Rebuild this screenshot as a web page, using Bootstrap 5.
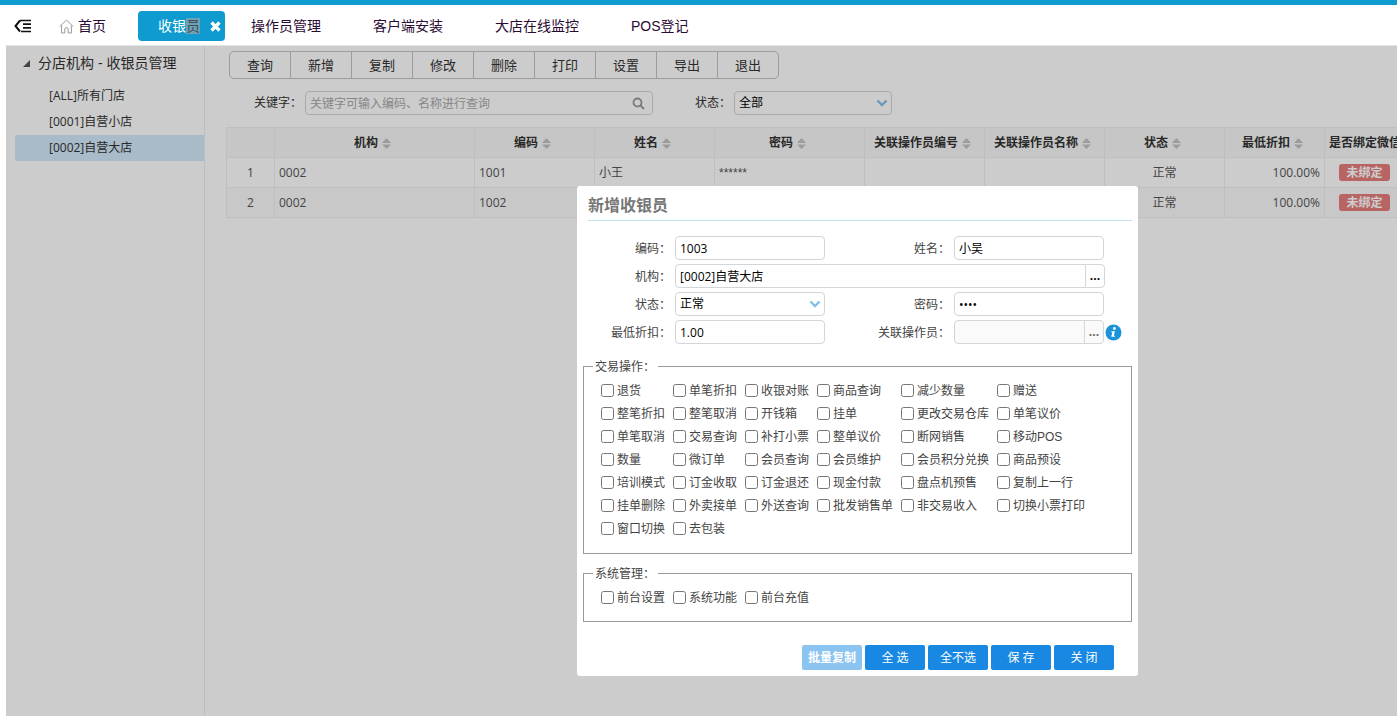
<!DOCTYPE html>
<html lang="zh-CN">
<head>
<meta charset="utf-8">
<meta name="viewport" content="width=device-width, initial-scale=1">
<title>收银员管理</title>
<link href="https://cdn.jsdelivr.net/npm/bootstrap@5.3.0/dist/css/bootstrap.min.css" rel="stylesheet">
<style>
body{font-family:"Open Sans","Noto Sans CJK SC",sans-serif;font-size:12px;line-height:18px;color:#333;background:#fff;overflow:hidden}
.tab-strip,.tree-title,.rights,.masked{font-family:"Liberation Sans","Noto Sans CJK SC",sans-serif}
.app-shell{min-height:100vh;border-top:5px solid #0f9bd0;padding-left:6px}
.tab-strip{height:40px;padding:2px 8px 0;color:#2b0a33}
.tab-strip a,.tree-title{font-size:14px;line-height:20px;color:inherit;text-decoration:none;white-space:nowrap}
.tab-strip .nav-item{margin-right:52px}
.tab-strip .tab-home{margin:0 32px 0 28px}
.tab-strip .tab-active{height:30px;margin-right:26px;padding:0 4px 0 20px;background:#0f9bd0;border-radius:4px;color:#fff}
.picked{background:#6fa2b8;color:#3b4d55}
.plain-btn{border:0;background:none;padding:0;color:inherit;display:flex}
.tab-close{margin-left:10px}
.work-area{border-top:1px solid #e4e4e4}
.side-tree{width:199px;border-right:1px solid #ebeef0;padding:7px 0 0 9px}
.tree-title{padding:0 0 10px 8px}
.tree-node{display:block;height:26px;padding:4px 0 4px 34px;color:#333;text-decoration:none;border-radius:2px 0 0 2px}
.tree-node.current{background:#d4e9fb}
.main-pane{min-width:0;padding:5px 0 0 21px}
.tool-row{margin-left:3px}
.tool-row .btn{width:62px;height:28px;padding:0;font-size:13px;line-height:18px;color:#333;border-color:#c4c4c4;border-radius:5px;flex:none}
.filter-row{margin:12px 0 12px 28px}
.field{height:24px;min-height:24px;padding:0 4px;font-size:12px;line-height:18px;border:1px solid #d3d6d8;border-radius:4px;color:#000;background-color:#fff;box-shadow:none}
.field::placeholder{color:#aaa}
.field-select{padding:0 20px 0 4px;background-image:url("data:image/svg+xml,%3Csvg xmlns='http://www.w3.org/2000/svg' viewBox='0 0 12 8'%3E%3Cpath d='M1.5 1.5 6 6l4.500-4.500' fill='none' stroke='%237fbfe8' stroke-width='2.300'/%3E%3C/svg%3E");background-size:12px 8px;background-position:right 3px center}
.keyword-box{margin:0 42px 0 3px}
.keyword{width:348px}
.status-filter{width:158px;margin-left:3px}
.filter-row label[for=state]{width:36px;white-space:nowrap}
.find-icon{top:6px;right:8px}
.grid-wrap{overflow:hidden}
.cashier-grid{width:1178px;table-layout:fixed;margin:0;font-size:12px;border-color:#edf1f3;color:#555;--bs-table-color:#555}
.cashier-grid>:not(caption)>*>*{padding:0 4px;height:30px;vertical-align:middle;border-width:1px;white-space:nowrap;color:#555;background:#fff}
.cashier-grid>thead>tr>th{background:#f8f8f8;text-align:center;color:#333;font-weight:700;padding-right:8px}
.cashier-grid>thead>tr>th:last-child{padding:0 4px}
.cashier-grid>tbody>tr:nth-child(2)>*{background:#fafafa}
.unbound{display:inline-block;width:51px;height:17px;line-height:17px;border-radius:3px;background:#e67d7b;color:#fff;font-weight:700;text-align:center}
.sort-mark{margin-left:4px}
.veil{background:rgba(0,0,0,.2);padding:140px 0 40px 571px;z-index:10}
.dialog-card{width:561px;background:#fff;border-radius:3px;padding:8px 6px 6px}
.dialog-title{margin:0 0 15px 5px;padding-bottom:4px;font-size:16px;line-height:22px;font-weight:700;color:#777;border-bottom:1px solid #bfe2ee}
.entry-grid{display:grid;grid-template-columns:92px 150px 129px 150px 18px;row-gap:4px;align-items:center}
.entry-grid label{text-align:right;padding:2px 4px 0 0;color:#444}
.span-org{grid-column:2 / 5;width:auto;margin-right:-1px}
.pick-btn{width:20px;height:24px;padding:0;font-size:12px;line-height:18px;border:1px solid #d3d6d8;border-radius:0 4px 4px 0;background:#fff;color:#000;font-weight:700}
.field:disabled,.pick-btn:disabled{background:#fafafa;color:#666;border-color:#d3d6d8;opacity:1}
.rights{border:1px solid #999;padding:0 0 0 17px;color:#444}
.rights legend{float:none;width:65px;margin:0 0 0 -8px;padding:2px 2px 0;font-size:12px;line-height:18px;white-space:nowrap}
.rights-grid{display:grid;grid-template-columns:72px 72px 72px 84px 96px 110px;grid-auto-rows:23px;align-items:center}
.rights-grid label{display:flex;align-items:center;gap:3px;white-space:nowrap}
.rights-grid input{width:13px;height:13px;margin:0;flex:none}
.rights-trade{padding-top:3px;padding-bottom:13px;margin-top:12px}
.rights-system{padding-top:3px;padding-bottom:12px;margin-top:9px}
.act{width:60px;height:25px;padding:0;font-size:12px;line-height:18px;border:0;border-radius:2px;background:#1888e2;color:#fff}
.act:disabled{background:#8cc4f1;color:#fff;font-weight:700;opacity:1}
.act-row{gap:3px;margin-top:23px;padding-right:18px}
</style>
</head>
<body>
<div class="app-shell d-flex flex-column">
  <nav class="tab-strip d-flex align-items-center">
    <button class="plain-btn" type="button" aria-label="收起菜单">
      <svg width="17" height="14" viewBox="0 0 17 14"><path d="M6 1.500 1.500 7 6 12.500" fill="none" stroke="#111" stroke-width="2"/><path d="M6 1.500h11M9 5.200h8M9 8.900h8M7 12.500h10" stroke="#111" stroke-width="1.700"/></svg>
    </button>
    <a href="#" class="tab-home d-flex align-items-center gap-1">
      <svg width="15" height="15" viewBox="0 0 15 15" fill="none" stroke="#999" stroke-width="1"><path d="M.7 7.600 7.500 1l6.800 6.600M2.600 6.500V14h3.200V9.800q0-1 1-1h1.400q1 0 1 1V14h3.200V6.500"/></svg>首页</a>
    <div class="tab-active d-flex align-items-center">
      <a href="#">收银<span class="picked">员</span></a>
      <button class="plain-btn tab-close" type="button" aria-label="关闭标签">
        <svg width="11" height="11" viewBox="0 0 11 11"><path d="M1.500 1.500l8 8m0-8-8 8" stroke="#fff" stroke-width="3.200"/></svg>
      </button>
    </div>
    <a href="#" class="nav-item">操作员管理</a>
    <a href="#" class="nav-item">客户端安装</a>
    <a href="#" class="nav-item">大店在线监控</a>
    <a href="#" class="nav-item">POS登记</a>
  </nav>

  <div class="work-area position-relative d-flex flex-grow-1">
    <aside class="side-tree flex-shrink-0">
      <div class="tree-title d-flex align-items-center gap-2">
        <svg width="7" height="7" viewBox="0 0 7 7"><path d="M7 0v7H0z" fill="#555"/></svg>
        <span>分店机构 - 收银员管理</span>
      </div>
      <a href="#" class="tree-node">[ALL]所有门店</a>
      <a href="#" class="tree-node">[0001]自营小店</a>
      <a href="#" class="tree-node current">[0002]自营大店</a>
    </aside>

    <main class="main-pane flex-grow-1">
      <div class="tool-row btn-group">
        <button class="btn btn-outline-secondary" type="button">查询</button>
        <button class="btn btn-outline-secondary" type="button">新增</button>
        <button class="btn btn-outline-secondary" type="button">复制</button>
        <button class="btn btn-outline-secondary" type="button">修改</button>
        <button class="btn btn-outline-secondary" type="button">删除</button>
        <button class="btn btn-outline-secondary" type="button">打印</button>
        <button class="btn btn-outline-secondary" type="button">设置</button>
        <button class="btn btn-outline-secondary" type="button">导出</button>
        <button class="btn btn-outline-secondary" type="button">退出</button>
      </div>
      <div class="filter-row d-flex align-items-center">
        <label for="keyword">关键字：</label>
        <div class="keyword-box position-relative">
          <input id="keyword" class="form-control field keyword" type="text" placeholder="关键字可输入编码、名称进行查询">
          <svg class="find-icon position-absolute" width="13" height="13" viewBox="0 0 13 13" fill="none" stroke="#999" stroke-width="1.800"><circle cx="5.500" cy="5.500" r="4"/><path d="m8.500 8.500 3.500 3.500"/></svg>
        </div>
        <label for="state">状态：</label>
        <select id="state" class="form-select field field-select status-filter"><option>全部</option></select>
      </div>
      <div class="grid-wrap">
        <table class="table cashier-grid">
          <colgroup><col style="width:48px"><col style="width:200px"><col style="width:120px"><col style="width:120px"><col style="width:150px"><col style="width:120px"><col style="width:120px"><col style="width:120px"><col style="width:100px"><col style="width:80px"></colgroup>
          <thead>
            <tr id="heads"><th></th><th>机构</th><th>编码</th><th>姓名</th><th>密码</th><th>关联操作员编号</th><th>关联操作员名称</th><th>状态</th><th>最低折扣</th><th>是否绑定微信</th></tr>
          </thead>
          <tbody>
            <tr><td class="text-center">1</td><td>0002</td><td>1001</td><td>小王</td><td class="masked">******</td><td></td><td></td><td class="text-center">正常</td><td class="text-end">100.00%</td><td class="text-center"><span class="unbound">未绑定</span></td></tr>
            <tr><td class="text-center">2</td><td>0002</td><td>1002</td><td></td><td></td><td></td><td></td><td class="text-center">正常</td><td class="text-end">100.00%</td><td class="text-center"><span class="unbound">未绑定</span></td></tr>
          </tbody>
        </table>
      </div>
    </main>

    <div class="veil position-absolute top-0 start-0 w-100 h-100">
      <form class="dialog-card" role="dialog" aria-labelledby="dlg-title" autocomplete="off">
        <h2 class="dialog-title" id="dlg-title">新增收银员</h2>
        <div class="entry-grid">
          <label for="code">编码：</label>
          <input id="code" class="form-control field" type="text" value="1003">
          <label for="name">姓名：</label>
          <input id="name" class="form-control field" type="text" value="小吴">
          <span></span>

          <label for="org">机构：</label>
          <div class="input-group flex-nowrap span-org">
            <input id="org" class="form-control field" type="text" value="[0002]自营大店">
            <button class="btn pick-btn" type="button" aria-label="选择机构">...</button>
          </div>
          <span></span>

          <label for="dlg-state">状态：</label>
          <select id="dlg-state" class="form-select field field-select"><option>正常</option></select>
          <label for="pwd">密码：</label>
          <input id="pwd" class="form-control field" type="password" value="1234">
          <span></span>

          <label for="discount">最低折扣：</label>
          <input id="discount" class="form-control field" type="text" value="1.00">
          <label for="operator">关联操作员：</label>
          <div class="input-group flex-nowrap">
            <input id="operator" class="form-control field" type="text" disabled>
            <button class="btn pick-btn" type="button" disabled aria-label="选择操作员">...</button>
          </div>
          <svg class="ms-auto" width="17" height="17" viewBox="0 0 17 17"><circle cx="8.500" cy="8.500" r="8" fill="#1a93d8"/><circle cx="9.400" cy="4.500" r="1.400" fill="#fff"/><path d="M6.300 7.200h3.600L8.800 11.800h1.300l-.3 1H6.200l1.100-4.600h-1.200z" fill="#fff"/></svg>
        </div>

        <fieldset class="rights rights-trade">
          <legend>交易操作：</legend>
          <div class="rights-grid" data-items="退货,单笔折扣,收银对账,商品查询,减少数量,赠送,整笔折扣,整笔取消,开钱箱,挂单,更改交易仓库,单笔议价,单笔取消,交易查询,补打小票,整单议价,断网销售,移动POS,数量,微订单,会员查询,会员维护,会员积分兑换,商品预设,培训模式,订金收取,订金退还,现金付款,盘点机预售,复制上一行,挂单删除,外卖接单,外送查询,批发销售单,非交易收入,切换小票打印,窗口切换,去包装"></div>
        </fieldset>
        <fieldset class="rights rights-system">
          <legend>系统管理：</legend>
          <div class="rights-grid" data-items="前台设置,系统功能,前台充值"></div>
        </fieldset>

        <div class="act-row d-flex justify-content-end">
          <button class="btn act" type="button" disabled>批量复制</button>
          <button class="btn act" type="button">全 选</button>
          <button class="btn act" type="button">全不选</button>
          <button class="btn act" type="submit">保 存</button>
          <button class="btn act" type="button">关 闭</button>
        </div>
      </form>
    </div>
  </div>
</div>
<script src="https://cdn.jsdelivr.net/npm/bootstrap@5.3.0/dist/js/bootstrap.bundle.min.js"></script>
<script>
// permission check boxes
document.querySelectorAll('[data-items]').forEach(function (box) {
  box.dataset.items.split(',').forEach(function (name) {
    var label = document.createElement('label');
    var input = document.createElement('input');
    input.type = 'checkbox';
    label.append(input, name);
    box.append(label);
  });
});
// sort arrows on every sortable heading
document.querySelectorAll('#heads th').forEach(function (th, i, all) {
  if (i === 0 || i === all.length - 1) return;
  th.insertAdjacentHTML('beforeend', '<svg class="sort-mark" width="9" height="11" viewBox="0 0 9 11"><path d="M0 5 4.500 0 9 5zM0 6.500h9L4.500 11z" fill="#c4c4c4"/></svg>');
});
</script>
</body>
</html>
